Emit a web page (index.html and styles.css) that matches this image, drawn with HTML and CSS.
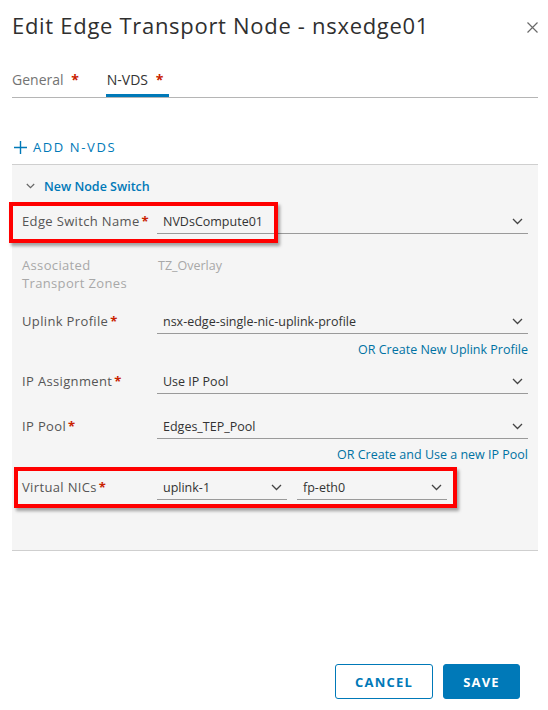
FILE: index.html
```html
<!DOCTYPE html>
<html lang="en">
<head>
<meta charset="utf-8">
<title>Edit Edge Transport Node</title>
<link rel="stylesheet" href="styles.css">
</head>
<body>
<div class="modal">
  <header class="modal-header">
    <h1 class="title">Edit Edge Transport Node - nsxedge01</h1>
    <span class="close" aria-label="Close">
      <svg width="11" height="11" viewBox="0 0 11 11"><path d="M0.5 0.5 L10.5 10.5 M10.5 0.5 L0.5 10.5" stroke="#6a6a6a" stroke-width="1.2" fill="none"/></svg>
    </span>
  </header>

  <nav class="tabs">
    <div class="tab">General <span class="req">*</span></div>
    <div class="tab active">N-VDS <span class="req">*</span></div>
  </nav>

  <div class="add-link">
    <svg class="plus" width="13" height="13" viewBox="0 0 13 13"><path d="M6.5 0 V13 M0 6.5 H13" stroke="#0079b8" stroke-width="1.4" fill="none"/></svg>
    <span>ADD N-VDS</span>
  </div>

  <section class="panel">
    <div class="panel-head">
      <svg class="chev-sm" width="9" height="6" viewBox="0 0 9 6"><path d="M0.8 1 L4.5 4.6 L8.2 1" stroke="#666" stroke-width="1.2" fill="none"/></svg>
      <span>New Node Switch</span>
    </div>

    <div class="row row-edge">
      <div class="label">Edge Switch Name<span class="req">*</span></div>
      <div class="control"><span class="value">NVDsCompute01</span><svg class="chev" width="11" height="7" viewBox="0 0 11 7"><path d="M1 1 L5.5 5.5 L10 1" stroke="#444" stroke-width="1.3" fill="none"/></svg></div>
      <div class="highlight hl-edge"></div>
    </div>

    <div class="row row-assoc">
      <div class="label disabled">Associated<br>Transport Zones</div>
      <div class="static disabled">TZ_Overlay</div>
    </div>

    <div class="row row-uplink">
      <div class="label">Uplink Profile<span class="req">*</span></div>
      <div class="control"><span class="value">nsx-edge-single-nic-uplink-profile</span><svg class="chev" width="11" height="7" viewBox="0 0 11 7"><path d="M1 1 L5.5 5.5 L10 1" stroke="#444" stroke-width="1.3" fill="none"/></svg></div>
    </div>
    <div class="link-row link-uplink"><span class="link">OR Create New Uplink Profile</span></div>

    <div class="row row-ipassign">
      <div class="label">IP Assignment<span class="req">*</span></div>
      <div class="control"><span class="value">Use IP Pool</span><svg class="chev" width="11" height="7" viewBox="0 0 11 7"><path d="M1 1 L5.5 5.5 L10 1" stroke="#444" stroke-width="1.3" fill="none"/></svg></div>
    </div>

    <div class="row row-ippool">
      <div class="label">IP Pool<span class="req">*</span></div>
      <div class="control"><span class="value">Edges_TEP_Pool</span><svg class="chev" width="11" height="7" viewBox="0 0 11 7"><path d="M1 1 L5.5 5.5 L10 1" stroke="#444" stroke-width="1.3" fill="none"/></svg></div>
    </div>
    <div class="link-row link-pool"><span class="link">OR Create and Use a new IP Pool</span></div>

    <div class="row row-nics">
      <div class="label">Virtual NICs<span class="req">*</span></div>
      <div class="nic-group">
        <div class="control nic-a"><span class="value">uplink-1</span><svg class="chev" width="11" height="7" viewBox="0 0 11 7"><path d="M1 1 L5.5 5.5 L10 1" stroke="#444" stroke-width="1.3" fill="none"/></svg></div>
        <div class="control nic-b"><span class="value">fp-eth0</span><svg class="chev" width="11" height="7" viewBox="0 0 11 7"><path d="M1 1 L5.5 5.5 L10 1" stroke="#444" stroke-width="1.3" fill="none"/></svg></div>
      </div>
      <div class="highlight hl-nics"></div>
    </div>
  </section>

  <footer class="footer">
    <button class="btn btn-outline">CANCEL</button>
    <button class="btn btn-primary">SAVE</button>
  </footer>
</div>
</body>
</html>
```

FILE: styles.css
```css
* { box-sizing: border-box; }

html, body {
  margin: 0;
  padding: 0;
  background: #ffffff;
}

body {
  font-family: "Open Sans", "Liberation Sans", sans-serif;
  color: #313131;
  width: 548px;
  height: 710px;
  overflow: hidden;
}

.modal {
  padding: 11px 10px 0 12px;
}

.modal-header {
  display: flex;
  align-items: center;
  justify-content: space-between;
  height: 28px;
}

.title {
  margin: 0;
  font-size: 22px;
  font-weight: 400;
  line-height: 28px;
  color: #2f2f2f;
  letter-spacing: 0.7px;
}

.close {
  display: flex;
  margin-top: 4px;
  margin-right: 0;
}

.tabs {
  display: flex;
  margin-top: 24px;
  border-bottom: 1px solid #b5b5b5;
  height: 35px;
}

.tab {
  font-size: 14px;
  line-height: 34px;
  color: #737373;
  padding: 0 6px 0 0;
  margin-right: 21px;
}

.tab.active {
  color: #333;
  padding: 0 6px 0 1px;
  box-shadow: inset 0 -3px 0 #0079b8;
}

.tab .req {
  margin-left: 4px;
  color: #c92100;
  font-weight: 700;
}

.req {
  color: #c92100;
  font-weight: 700;
  margin-left: 2px;
}

.add-link {
  display: flex;
  align-items: center;
  margin-top: 40px;
  margin-left: 2px;
  height: 18px;
  color: #0079b8;
  font-size: 13px;
  letter-spacing: 1.6px;
}

.add-link .plus {
  margin-right: 6px;
}

.panel {
  margin-top: 8px;
  background: #f5f5f5;
  border-top: 1px solid #cfcfcf;
  border-bottom: 1px solid #cfcfcf;
  padding: 11px 10px 50px 10px;
}

.panel-head {
  display: flex;
  align-items: center;
  height: 20px;
  color: #0079b8;
  font-size: 12.5px;
  font-weight: 600;
}

.panel-head .chev-sm {
  margin-left: 4px;
  margin-right: 9px;
}

.row {
  position: relative;
  display: grid;
  grid-template-columns: 135px 1fr;
  align-items: center;
}

.label {
  font-size: 13px;
  color: #565656;
  line-height: 15px;
  letter-spacing: 0.35px;
}

.row-assoc .label {
  line-height: 18px;
}

.label.disabled,
.static.disabled {
  color: #a8a8a8;
}

.static {
  font-size: 12.5px;
  align-self: start;
  line-height: 18px;
  padding-left: 1px;
  margin-top: 1px;
}

.control {
  display: flex;
  align-items: center;
  justify-content: space-between;
  height: 25px;
  border-bottom: 1px solid #9a9a9a;
  padding: 0 5px 0 6px;
}

.value {
  font-size: 12.5px;
  color: #333;
}

.row-edge { margin-top: 13px; }
.row-assoc { margin-top: 22px; }
.row-uplink { margin-top: 17px; }
.row-ipassign { margin-top: 11px; }
.row-ippool { margin-top: 20px; }
.row-nics { margin-top: 12px; }

.link-row {
  display: flex;
  justify-content: flex-end;
  margin-top: 8px;
  height: 16px;
}

.link {
  font-size: 12.5px;
  line-height: 16px;
  color: #0072a3;
}

.nic-group {
  display: flex;
  gap: 10px;
}

.nic-a { width: 130px; }
.nic-b { width: 150px; }

.highlight {
  position: absolute;
  border: 4px solid #ff0000;
  box-shadow: 2px 3px 3px rgba(0, 0, 0, 0.35);
  pointer-events: none;
}

.hl-edge {
  left: -13px;
  top: -7px;
  width: 269px;
  height: 41px;
}

.hl-nics {
  left: -8px;
  top: -8px;
  width: 443px;
  height: 41px;
}

.footer {
  display: flex;
  justify-content: flex-end;
  gap: 10px;
  margin-top: 113px;
  padding-right: 18px;
}

.btn {
  height: 35px;
  border-radius: 3px;
  font-family: "Open Sans", "Liberation Sans", sans-serif;
  font-size: 13px;
  font-weight: 700;
  letter-spacing: 1.2px;
  cursor: pointer;
}

.btn-outline {
  width: 98px;
  background: #fff;
  border: 1px solid #0079b8;
  color: #0079b8;
}

.btn-primary {
  width: 77px;
  background: #0079b8;
  border: 1px solid #0079b8;
  color: #fff;
}
```
